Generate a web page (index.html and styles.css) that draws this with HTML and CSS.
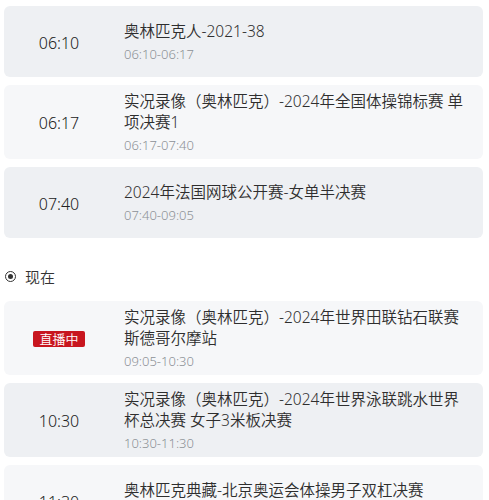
FILE: index.html
```html
<!DOCTYPE html>
<html lang="zh-CN">
<head>
<meta charset="utf-8">
<title>节目单</title>
<link rel="stylesheet" href="styles.css">
</head>
<body>
<div class="list">
  <div class="item gray">
    <div class="time">06:10</div>
    <div class="info">
      <div class="title">奥林匹克人-2021-38</div>
      <div class="range">06:10-06:17</div>
    </div>
  </div>
  <div class="item light">
    <div class="time">06:17</div>
    <div class="info">
      <div class="title">实况录像（奥林匹克）-2024年全国体操锦标赛 单项决赛1</div>
      <div class="range">06:17-07:40</div>
    </div>
  </div>
  <div class="item gray">
    <div class="time">07:40</div>
    <div class="info">
      <div class="title">2024年法国网球公开赛-女单半决赛</div>
      <div class="range">07:40-09:05</div>
    </div>
  </div>

  <div class="now">
    <span class="radio"><span class="dot"></span></span>
    <span class="now-text">现在</span>
  </div>

  <div class="item light">
    <div class="time"><span class="badge">直播中</span></div>
    <div class="info">
      <div class="title">实况录像（奥林匹克）-2024年世界田联钻石联赛 斯德哥尔摩站</div>
      <div class="range">09:05-10:30</div>
    </div>
  </div>
  <div class="item gray">
    <div class="time">10:30</div>
    <div class="info">
      <div class="title">实况录像（奥林匹克）-2024年世界泳联跳水世界杯总决赛 女子3米板决赛</div>
      <div class="range">10:30-11:30</div>
    </div>
  </div>
  <div class="item light">
    <div class="time">11:30</div>
    <div class="info">
      <div class="title">奥林匹克典藏-北京奥运会体操男子双杠决赛</div>
      <div class="range">11:30-12:30</div>
    </div>
  </div>
</div>
</body>
</html>
```
FILE: styles.css
```css
html, body {
  margin: 0;
  padding: 0;
  background: #ffffff;
}
body {
  font-family: "Noto Sans", "Noto Sans CJK SC", sans-serif;
  font-weight: 350;
  color: #333333;
  overflow: hidden;
}
.list {
  padding: 6px 6px 0 4px;
}
.item {
  display: flex;
  align-items: center;
  min-height: 61px;
  padding: 6px 0 4px;
  margin-bottom: 8px;
  border-radius: 6px;
}
.item.gray {
  background: #eef0f3;
}
.item.light {
  background: #f6f7f9;
}
.time {
  width: 110px;
  flex: none;
  display: flex;
  justify-content: center;
  font-size: 16px;
  line-height: 22px;
  color: #222222;
}
.info {
  flex: 1;
  margin-left: 10px;
  padding-right: 10px;
}
.title {
  font-size: 15.5px;
  line-height: 21px;
  color: #2e2e2e;
}
.range {
  margin-top: 2px;
  font-size: 13px;
  line-height: 20px;
  color: #8c9096;
}
.badge {
  display: inline-block;
  width: 52px;
  height: 16px;
  line-height: 16px;
  text-align: center;
  font-size: 13px;
  color: #ffffff;
  background: #c8161f;
  border-radius: 2px;
}
.now {
  display: flex;
  align-items: center;
  height: 24px;
  margin: 26px 0 13px;
}
.radio {
  width: 9px;
  height: 9px;
  border: 1.5px solid #333333;
  border-radius: 50%;
  display: flex;
  align-items: center;
  justify-content: center;
  margin-left: 1px;
}
.dot {
  width: 5px;
  height: 5px;
  border-radius: 50%;
  background: #333333;
}
.now-text {
  margin-left: 9px;
  font-size: 15px;
  color: #333333;
}
```
